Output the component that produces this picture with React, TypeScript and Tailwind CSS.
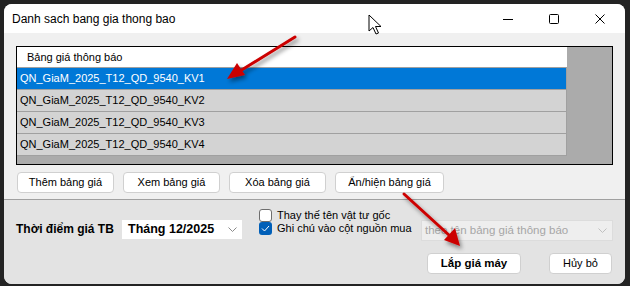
import React from "react"

const rows = [
  "QN_GiaM_2025_T12_QD_9540_KV1",
  "QN_GiaM_2025_T12_QD_9540_KV2",
  "QN_GiaM_2025_T12_QD_9540_KV3",
  "QN_GiaM_2025_T12_QD_9540_KV4",
]

function Chevron({ color = "#6b6b6b" }: { color?: string }) {
  return (
    <svg width="9" height="6" viewBox="0 0 9 6">
      <path d="M0.5 0.5 L4.5 4.5 L8.5 0.5" fill="none" stroke={color} strokeWidth="1" />
    </svg>
  )
}

function Btn({ children, className = "" }: { children: React.ReactNode; className?: string }) {
  return (
    <button
      className={`h-[21px] bg-white border border-[#d0d0d0] rounded-[4px] leading-none text-black flex items-center justify-center whitespace-nowrap ${className}`}
    >
      {children}
    </button>
  )
}

export default function App() {
  return (
    <div
      className="w-[630px] h-[286px] bg-[#232323] pt-[4px] pl-[4px] overflow-hidden"
      style={{ fontFamily: '"Liberation Sans", Arial, sans-serif' }}
    >
      <div className="relative w-[621px] h-[280px] rounded-[8px] overflow-hidden bg-[#f0f0f0] flex flex-col">
        {/* title bar */}
        <div className="h-[29px] bg-white flex items-center pl-[8px] shrink-0">
          <span className="text-[12px] text-black">Danh sach bang gia thong bao</span>
          <div className="ml-auto flex items-center h-full">
            <div className="w-[46px] h-full flex items-center justify-center">
              <svg width="10" height="10" viewBox="0 0 10 10">
                <path d="M0 5.5 H10" stroke="#000" strokeWidth="1" />
              </svg>
            </div>
            <div className="w-[46px] h-full flex items-center justify-center">
              <svg width="10" height="10" viewBox="0 0 10 10">
                <rect x="0.5" y="0.5" width="9" height="9" rx="1" fill="none" stroke="#000" strokeWidth="1" />
              </svg>
            </div>
            <div className="w-[46px] h-full flex items-center justify-center mr-[2px]">
              <svg width="10" height="10" viewBox="0 0 10 10">
                <path d="M0.5 0.5 L9.5 9.5 M9.5 0.5 L0.5 9.5" stroke="#000" strokeWidth="1" />
              </svg>
            </div>
          </div>
        </div>

        {/* top section */}
        <div className="h-[167px] border-b border-[#a0a0a0] px-[12px] pt-[13px] shrink-0">
          <div className="h-[119px] border border-black bg-[#ababab] flex flex-col">
            <div className="w-[550px] h-[21px] bg-white border-b border-[#a0a0a0] flex items-center pl-[10px] text-[11px] text-black">
              Bảng giá thông báo
            </div>
            {rows.map((r, i) => (
              <div
                key={r}
                className={`w-[550px] h-[22px] border-b border-r border-[#a0a0a0] flex items-center pl-[3px] text-[11px] ${
                  i === 0 ? "bg-[#0078d7] text-white" : "bg-[#d3d3d3] text-black"
                }`}
              >
                {r}
              </div>
            ))}
          </div>
          <div className="flex gap-[9px] mt-[7px] pl-[1px] text-[11px]">
            <Btn className="w-[97px]">Thêm bảng giá</Btn>
            <Btn className="w-[97px]">Xem bảng giá</Btn>
            <Btn className="w-[97px]">Xóa bảng giá</Btn>
            <Btn className="w-[109px]">Ẩn/hiện bảng giá</Btn>
          </div>
        </div>

        {/* bottom section */}
        <div className="flex-1 bg-[#e3e3e3] px-[12px] pt-[9px]">
          <div className="h-[33px] flex items-start">
            <div className="w-[106px] mt-[10px] h-[19px] flex items-center text-[12px] font-bold text-black whitespace-nowrap">
              Thời điểm giá TB
            </div>
            <div className="w-[120px] h-[19px] mt-[11px] bg-white flex items-center pl-[6px] pr-[5px] text-[12.5px] font-bold text-black whitespace-nowrap">
              Tháng 12/2025
              <span className="ml-auto">
                <Chevron color="#8a8a8a" />
              </span>
            </div>
            <div className="w-[179px] pl-[17px] flex flex-col text-[11px] text-black leading-[13px] whitespace-nowrap">
              <label className="flex items-center gap-[5px] h-[13px]">
                <span className="w-[13px] h-[13px] rounded-[3px] border border-[#6e6e6e] bg-white shrink-0" />
                Thay thế tên vật tư gốc
              </label>
              <label className="flex items-center gap-[5px] h-[13px]">
                <span className="w-[13px] h-[13px] rounded-[3px] bg-[#005fb8] shrink-0 flex items-center justify-center">
                  <svg width="9" height="7" viewBox="0 0 9 7">
                    <path d="M1 3.5 L3.5 6 L8 1" fill="none" stroke="#fff" strokeWidth="1" />
                  </svg>
                </span>
                Ghi chú vào cột nguồn mua
              </label>
            </div>
            <div className="w-[192px] h-[21px] mt-[11px] bg-[#eeeeee] border border-[#dcdcdc] flex items-center pl-[3px] pr-[5px] text-[11.5px] text-[#a6a6a6] whitespace-nowrap">
              theo tên bảng giá thông báo
              <span className="ml-auto">
                <Chevron color="#c0c0c0" />
              </span>
            </div>
          </div>
          <div className="flex justify-end gap-[28px] mt-[11px] pr-[1px]">
            <Btn className="w-[94px] font-bold text-[11.5px]">Lắp giá máy</Btn>
            <Btn className="w-[63px] text-[11px]">Hủy bỏ</Btn>
          </div>
        </div>

        {/* annotations */}
        <svg className="absolute left-0 top-0 pointer-events-none" width="621" height="280" viewBox="0 0 621 280">
          <defs>
            <filter id="sh" x="-20%" y="-20%" width="140%" height="140%">
              <feDropShadow dx="2" dy="3" stdDeviation="2" floodColor="#000" floodOpacity="0.45" />
            </filter>
          </defs>
          <g filter="url(#sh)">
            <line x1="291" y1="33" x2="236" y2="67" stroke="#cc0000" strokeWidth="3" strokeLinecap="round" />
            <polygon points="223,75 233,59 241,71" fill="#cc0000" />
            <line x1="400" y1="190" x2="446" y2="232" stroke="#cc0000" strokeWidth="3" strokeLinecap="round" />
            <polygon points="456,242 440,236 451,224" fill="#cc0000" />
          </g>
          {/* mouse cursor */}
          <path
            d="M365 11 L365 27 L369 23.5 L372 30 L374.5 29 L371.5 22.5 L377 22.5 Z"
            fill="#fff"
            stroke="#000"
            strokeWidth="1"
            strokeLinejoin="round"
          />
        </svg>
      </div>
    </div>
  )
}
